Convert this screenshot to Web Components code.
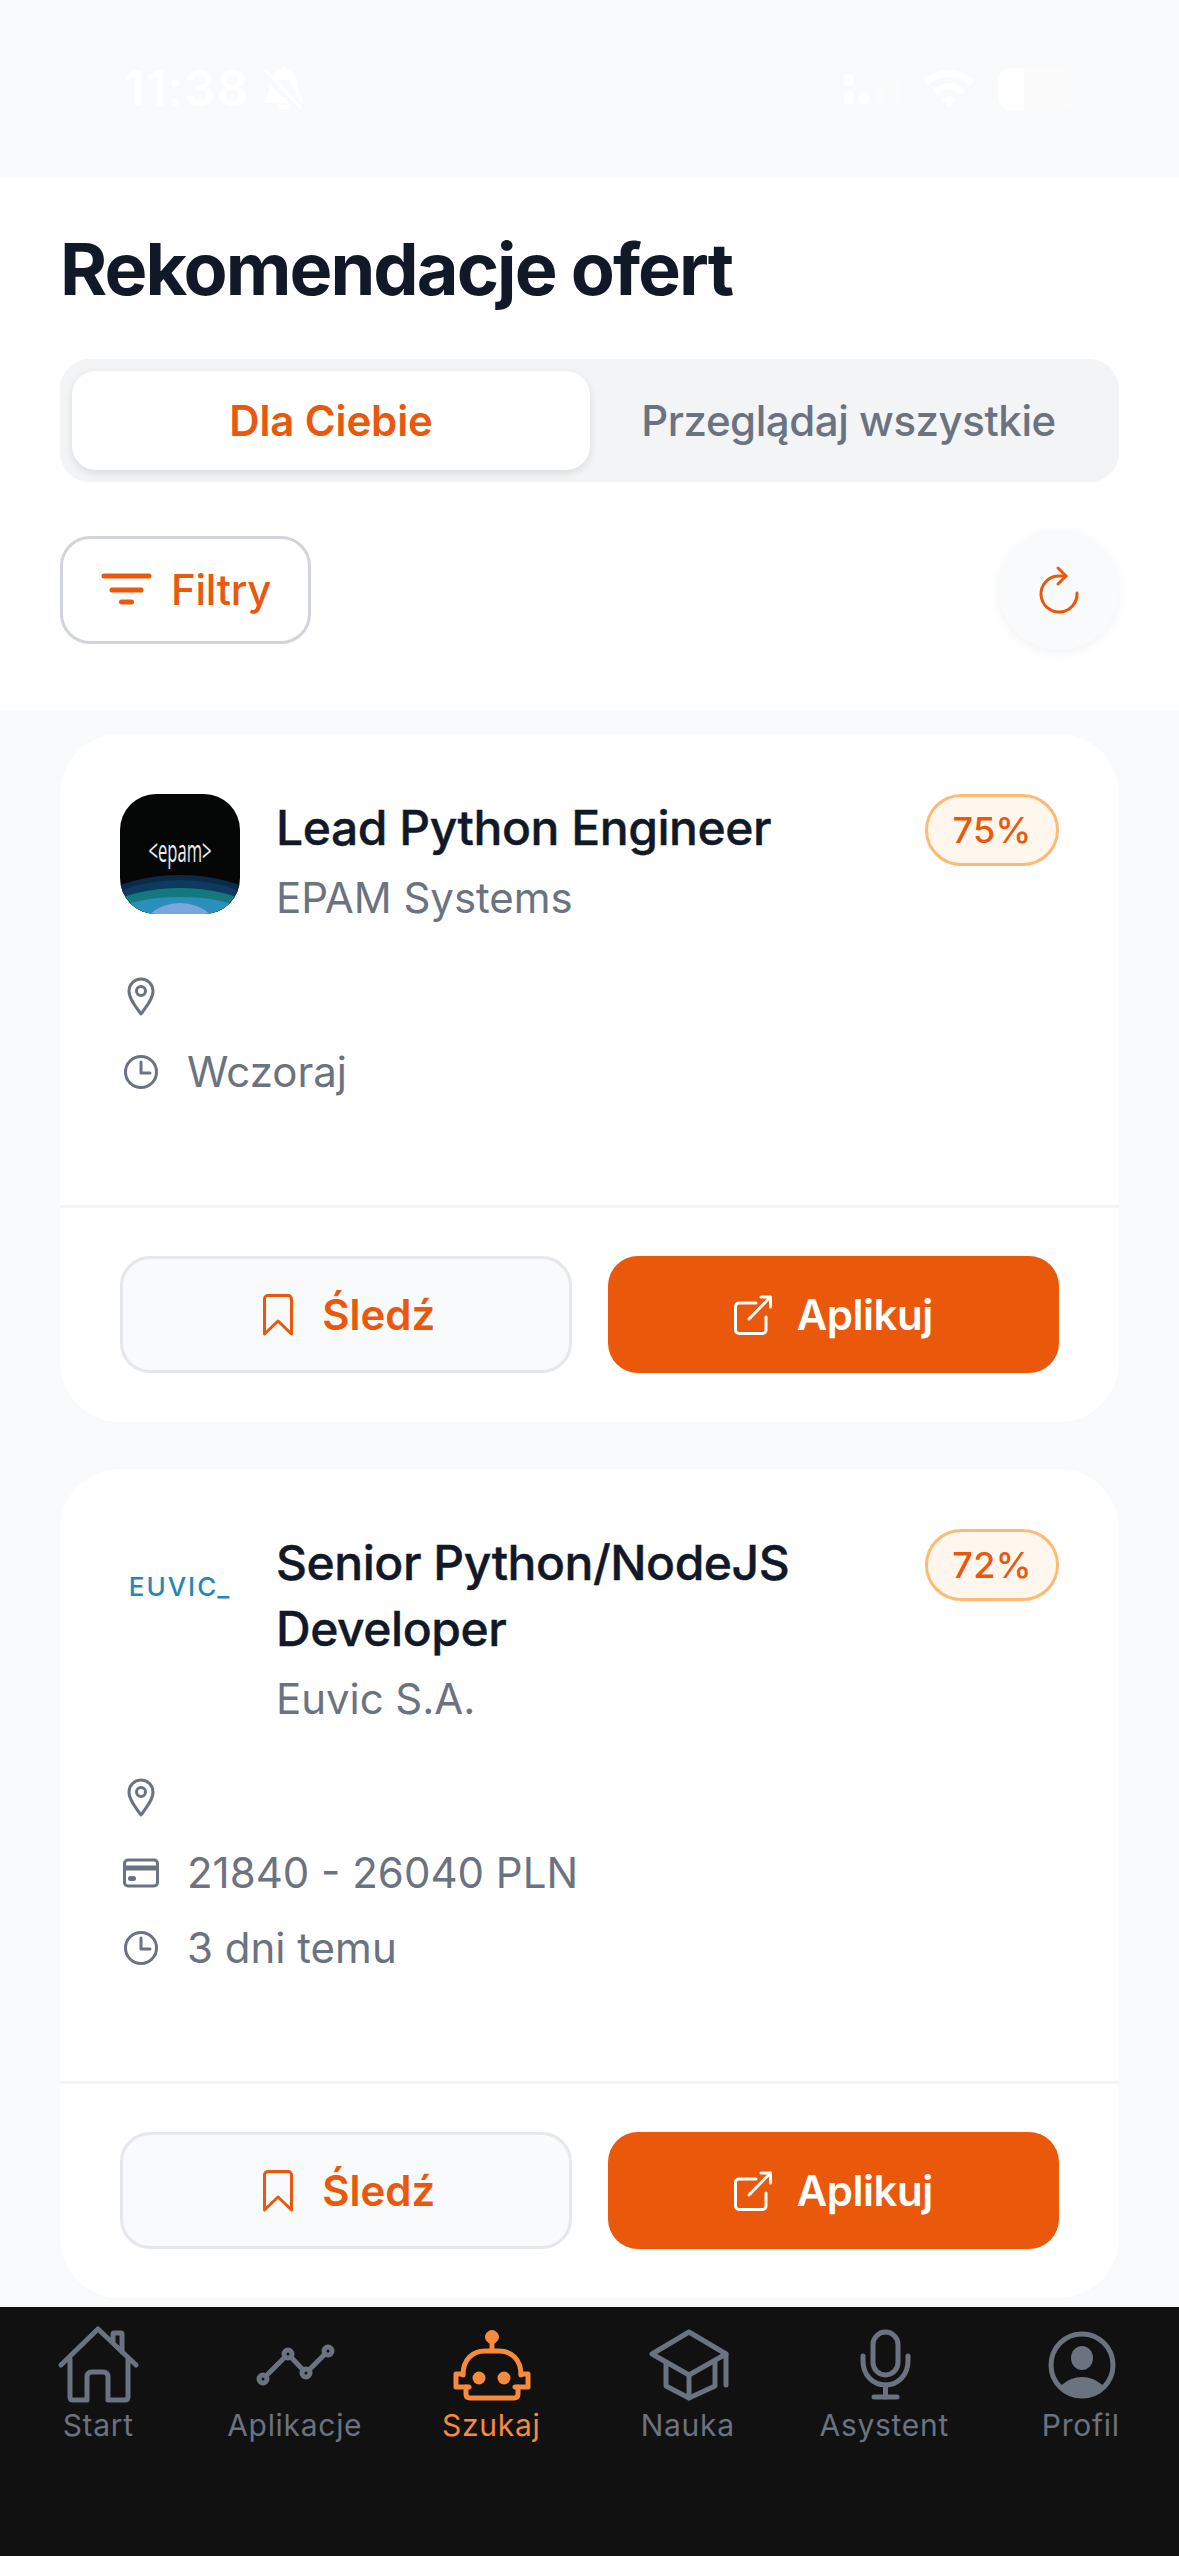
<!DOCTYPE html>
<html lang="pl"><head><meta charset="utf-8"><title>Rekomendacje ofert</title>
<style>
html,body{margin:0;padding:0;background:#f9fafb}
body{width:1179px;height:2556px;overflow:hidden;font-family:Inter,"Noto Sans",sans-serif}
</style></head><body>
<app-shell>
  <status-bar></status-bar>
  <page-header></page-header>
  <job-card slot="cards" title-text="Lead Python Engineer" company="EPAM Systems" match="75%" logo="epam" time="Wczoraj"></job-card>
  <job-card slot="cards" title-text="Senior Python/NodeJS Developer" company="Euvic S.A." match="72%" logo="euvic" salary="21840 - 26040 PLN" time="3 dni temu"></job-card>
  <bottom-nav slot="nav"></bottom-nav>
</app-shell>
<script>
const def=(name,html)=>customElements.define(name,class extends HTMLElement{
  constructor(){super();this.attachShadow({mode:'open'});}
  connectedCallback(){this.shadowRoot.innerHTML=html;}
});

def('app-shell',`<style>
:host{display:flex;flex-direction:column;width:1179px;height:2556px;background:#f9fafb;overflow:hidden}
main{flex:1;min-height:0;overflow:hidden;padding:24px 60px 0;display:flex;flex-direction:column;gap:47px}
</style>
<slot></slot><main><slot name="cards"></slot></main><slot name="nav"></slot>`);

def('status-bar',`<style>
:host{display:flex;align-items:center;height:177px;flex:none;background:#f9fafb;color:#fff;padding:0 99px 0 124px;box-sizing:border-box;justify-content:space-between}
.l,.r{display:flex;align-items:center}
.t{font:600 50px/1 Inter,sans-serif;letter-spacing:.6px}
.l{gap:14px;margin-top:-1px}.r{gap:24px}
svg{display:block}
</style>
<div class="l"><span class="t">11:38</span>
<svg width="42" height="44" viewBox="0 0 42 44" fill="#fff"><path d="M21 1c-2 0-3 1.500-3.500 3C11.500 5.500 9 11 9 14l17 0 11 22c2 1 4-1 2-4-2-3-4-6-4-13 0-7-3-13-10.500-15C24 2 23 1 21 1z"/><path d="M7 19c-1 6-2 10-5 15-1 2 0 3 2 3h22L7 19z"/><path d="M15 39h12c0 3-3 5-6 5s-6-2-6-5z"/><path d="M2 4 L38 42" stroke="#fff" stroke-width="3"/></svg></div>
<div class="r">
<svg width="56" height="30" viewBox="0 0 56 30" fill="#fff"><rect x="0" y="0" width="10" height="12" rx="4"/><rect x="0" y="17" width="10" height="13" rx="4"/><rect x="15" y="17" width="10" height="13" rx="4"/><rect x="30" y="8" width="10" height="22" rx="4" opacity=".2"/><rect x="45" y="0" width="10" height="30" rx="4" opacity=".2"/></svg>
<svg width="50" height="38" viewBox="0 0 50 38" fill="#fff"><path d="M25 0C15 0 7 4 0 11l4 5c6-6 13-9 21-9s15 3 21 9l4-5C43 4 35 0 25 0z"/><path d="M25 13c-6 0-12 3-16 7l4 5c3-3 7-5 12-5s9 2 12 5l4-5c-4-4-10-7-16-7z"/><path d="M25 26c-3 0-5 1-7 3l7 9 7-9c-2-2-4-3-7-3z"/></svg>
<svg width="82" height="42" viewBox="0 0 82 42"><rect x="0" y="0" width="76" height="42" rx="13" fill="#fff" opacity=".3"/><path d="M13 0H26V42H13A13 13 0 0 1 0 29V13A13 13 0 0 1 13 0z" fill="#fff"/><path d="M78 15c3 1 4 3 4 6s-1 5-4 6z" fill="#fff" opacity=".3"/></svg>
</div>`);

const filterIcon=`<svg width="54" height="54" viewBox="0 0 54 54" fill="none" stroke="#ea580c" stroke-linecap="round" stroke-width="5"><path d="M3 13H48"/><path d="M11 27H40"/><path d="M20.500 39H30.500"/></svg>`;
const refreshIcon=`<svg width="44" height="50" viewBox="0 0 44 50" fill="none" stroke="#ea580c" stroke-width="3" stroke-linecap="round" stroke-linejoin="round"><path d="M40 28a18 18 0 1 1-19-17h8"/><path d="M21 3l8 8-8 8"/></svg>`;

def('page-header',`<style>
:host{display:block;flex:none;height:533px;background:#fff;padding:0 60px;box-sizing:border-box}
h1{margin:0;padding-top:53px;font:700 72px/78px Inter,sans-serif;color:#111827;letter-spacing:-1.95px}
.tabs{display:grid;grid-template-columns:518px 1fr;margin-top:51px;height:123px;padding:12px;box-sizing:border-box;background:#f3f4f6;border-radius:30px;box-shadow:0 1px 2px rgba(0,0,0,.02)}
.tab{display:flex;align-items:center;justify-content:center;font:500 42px/1 Inter,sans-serif;color:#6b7280;border-radius:24px;letter-spacing:-.45px}
.on{background:#fff;color:#ea580c;font-weight:600;box-shadow:0 3px 9px rgba(0,0,0,.1);letter-spacing:-.15px}
.row{display:flex;justify-content:space-between;align-items:center;margin-top:48px}
.filter{display:flex;align-items:center;gap:16px;box-sizing:border-box;width:251px;height:108px;padding-left:38px;border:3px solid #d1d5db;border-radius:30px;font:500 42px/1 Inter,sans-serif;color:#ea580c;letter-spacing:-.3px}
.ref{display:flex;align-items:center;justify-content:center;width:120px;height:120px;border-radius:50%;background:#f9fafb;box-shadow:0 3px 12px rgba(0,0,0,.06)}
svg{display:block}
</style>
<h1>Rekomendacje ofert</h1>
<div class="tabs"><div class="tab on">Dla Ciebie</div><div class="tab">Przeglądaj wszystkie</div></div>
<div class="row"><div class="filter">${filterIcon}<span>Filtry</span></div><div class="ref">${refreshIcon}</div></div>`);

const G='#6b7280';
const pin=`<svg width="42" height="42" viewBox="0 0 42 42" fill="none" stroke="${G}" stroke-width="3"><path d="M21 38C16 31 9 23 9 15a12 12 0 0 1 24 0c0 8-7 16-12 23z" stroke-linejoin="round"/><circle cx="21" cy="15" r="4.500"/></svg>`;
const clock=`<svg width="42" height="42" viewBox="0 0 42 42" fill="none" stroke="${G}" stroke-width="3" stroke-linecap="round" stroke-linejoin="round"><circle cx="21" cy="21" r="15.500"/><path d="M21 11V22H30"/></svg>`;
const cardI=`<svg width="42" height="42" viewBox="0 0 42 42" fill="none" stroke="${G}" stroke-width="3"><rect x="4.500" y="8" width="33" height="26" rx="3.500"/><path d="M4 16H38" stroke-width="5"/><rect x="8" y="24" width="8" height="5" rx="2.500" fill="${G}" stroke="none"/></svg>`;
const bookmark=`<svg width="30" height="42" viewBox="0 0 30 42" fill="none" stroke="#ea580c" stroke-width="3" stroke-linejoin="round"><path d="M1.500 5a3.500 3.500 0 0 1 3.500-3.500h20a3.500 3.500 0 0 1 3.500 3.500v35L15 27 1.500 40z"/></svg>`;
const ext=`<svg width="38" height="40" viewBox="0 0 38 40" fill="none" stroke="#fff" stroke-width="3" stroke-linecap="round" stroke-linejoin="round"><path d="M22 8H5a3.500 3.500 0 0 0-3.500 3.500v23.500a3.500 3.500 0 0 0 3.500 3.500h23.500a3.500 3.500 0 0 0 3.500-3.500V22"/><path d="M15 24L36.500 2"/><path d="M27 2H36.500V12"/></svg>`;
const logos={
epam:`<div class="logo epam"><svg width="120" height="120" viewBox="0 0 120 120"><rect width="120" height="120" fill="#050707"/><ellipse cx="60" cy="156" rx="120" ry="75" fill="#0a2a48"/><ellipse cx="60" cy="168" rx="120" ry="82" fill="#0c3a60"/><ellipse cx="60" cy="156" rx="110" ry="62" fill="#14797f"/><ellipse cx="60" cy="148" rx="100" ry="45" fill="#2b8fbc"/><ellipse cx="60" cy="152" rx="45" ry="43" fill="#7aa6dc"/><text x="60" y="68" text-anchor="middle" fill="#eee" font-weight="500" font-family="'Liberation Sans Narrow','Open Sans',Inter,sans-serif" font-size="31" textLength="63" lengthAdjust="spacingAndGlyphs">&lt;epam&gt;</text></svg></div>`,
euvic:`<div class="logo"><span class="eu">EUVIC_</span></div>`};

customElements.define('job-card',class extends HTMLElement{
  constructor(){super();this.attachShadow({mode:'open'});}
  connectedCallback(){const a=n=>this.getAttribute(n);
  const row=(ic,t)=>`<div class="m">${ic}<span>${t||''}</span></div>`;
  this.shadowRoot.innerHTML=`<style>
:host{display:block;flex:none;background:#fff;border-radius:60px;box-shadow:0 1px 3px rgba(0,0,0,.01)}
.body{padding:60px 60px 102px}
.top{display:flex;align-items:flex-start}
.logo{flex:none;width:120px;height:120px;border-radius:36px;overflow:hidden;margin-right:36px;display:flex;align-items:center;justify-content:center}
.eu{font:500 26px/1 Inter,sans-serif;color:#2587b6;letter-spacing:2px;margin-top:-4px}
svg{display:block}
.txt{flex:1;min-width:0;padding-right:12px;padding-top:1px}
h2{margin:0;font:500 48px/66px Inter,sans-serif;color:#111827;letter-spacing:-.45px;-webkit-text-stroke:.4px #111827}
.co{margin-top:11px;font:400 42px/51px Inter,sans-serif;color:${G};letter-spacing:-.05px}
.badge{flex:none;box-sizing:border-box;width:134px;height:72px;display:flex;align-items:center;justify-content:center;border:3px solid #fdba74;background:#fff7ed;border-radius:36px;font:500 36px/1 Inter,sans-serif;color:#ea580c;letter-spacing:.3px}
.meta{display:flex;flex-direction:column;gap:12px;margin-top:42px}
.m{display:flex;align-items:center;gap:25px;height:63px;font:400 42px/63px Inter,sans-serif;color:${G}}
.acts{border-top:3px solid #f3f4f6;padding:48px 60px 49px;display:grid;grid-template-columns:1fr 1fr;gap:36px}
.btn{display:flex;align-items:center;justify-content:center;height:117px;box-sizing:border-box;border-radius:30px;font:600 42px/1 Inter,sans-serif}
.a{background:#f9fafb;border:3px solid #e5e7eb;color:#ea580c;gap:29px;padding-left:7px}
.b{background:#ea580c;color:#fff;gap:25px;letter-spacing:-.5px}
</style>
<div class="body"><div class="top">${logos[a('logo')]}<div class="txt"><h2>${a('title-text')}</h2><div class="co">${a('company')}</div></div><div class="badge">${a('match')}</div></div>
<div class="meta">${row(pin,'')}${a('salary')?row(cardI,a('salary')):''}${row(clock,a('time'))}</div></div>
<div class="acts"><div class="btn a">${bookmark}<span>Śledź</span></div><div class="btn b">${ext}<span>Aplikuj</span></div></div>`;}
});

const sv=(inner,c)=>`<svg width="84" height="84" viewBox="0 0 84 84" fill="none" stroke="${c}" stroke-width="5" stroke-linecap="round" stroke-linejoin="round">${inner}</svg>`;
const N='#6b7280',O='#f78a3d';
const icons=[
sv(`<path d="M5 40L42 4L80 40"/><path d="M14 34V72Q14 75 17 75H31V52Q31 47 36 47H47Q52 47 52 52V75H69Q72 75 72 72V34"/><path d="M57 17V9Q57 8 58 8H65Q66 8 66 9V27"/>`,N),
sv(`<path d="M10 54L35 29L53 48L75 26"/><circle cx="10" cy="54" r="4" fill="#111"/><circle cx="35" cy="29" r="4" fill="#111"/><circle cx="53" cy="48" r="4" fill="#111"/><circle cx="75" cy="26" r="4" fill="#111"/>`,N),
sv(`<circle cx="43" cy="12" r="6.500" fill="${O}" stroke-width="1"/><path d="M43 18V25"/><path d="M14 50C14 34 24 26 36 26H50C62 26 72 34 72 50"/><path d="M14 49H7V62H20"/><path d="M72 49H79V62H66"/><path d="M17 62V69Q17 73 21 73H65Q69 73 69 69V62"/><ellipse cx="30" cy="53" rx="6.500" ry="6.500" fill="${O}" stroke="none"/><ellipse cx="55" cy="53" rx="6.500" ry="6.500" fill="${O}" stroke="none"/>`,O),
sv(`<path d="M43 7L6 29L43 50L80 29z"/><path d="M20 38V61L43 73L69 61V38"/><path d="M43 50V73"/><path d="M80 29V60"/>`,N),
sv(`<rect x="31" y="7" width="25" height="43" rx="12.500"/><path d="M21 31V36C21 50 31 60 43.500 60S66 50 66 36V31"/><path d="M43.500 60V72"/><path d="M32 72H55"/>`,N),
`<svg width="84" height="84" viewBox="0 0 84 84" fill="none"><defs><clipPath id="pc"><circle cx="43" cy="40" r="31"/></clipPath></defs><circle cx="43" cy="40" r="31" stroke="${N}" stroke-width="5"/><ellipse cx="43" cy="33" rx="11" ry="12" fill="${N}"/><ellipse cx="43" cy="78" rx="28" ry="26" fill="${N}" clip-path="url(#pc)"/></svg>`
];
const labels=['Start','Aplikacje','Szukaj','Nauka','Asystent','Profil'];
def('bottom-nav',`<style>
:host{display:grid;grid-template-columns:repeat(6,1fr);flex:none;height:249px;background:#111;box-sizing:border-box;padding-top:18px;align-items:start}
.i{display:flex;flex-direction:column;align-items:center;color:${N};font:400 30px/36px Inter,sans-serif;letter-spacing:.7px}
.i span{margin-top:-2px}
.on{color:${O}}
svg{display:block}
</style>`+labels.map((l,i)=>`<div class="i${i==2?' on':''}">${icons[i]}<span>${l}</span></div>`).join(''));
</script>
</body></html>
